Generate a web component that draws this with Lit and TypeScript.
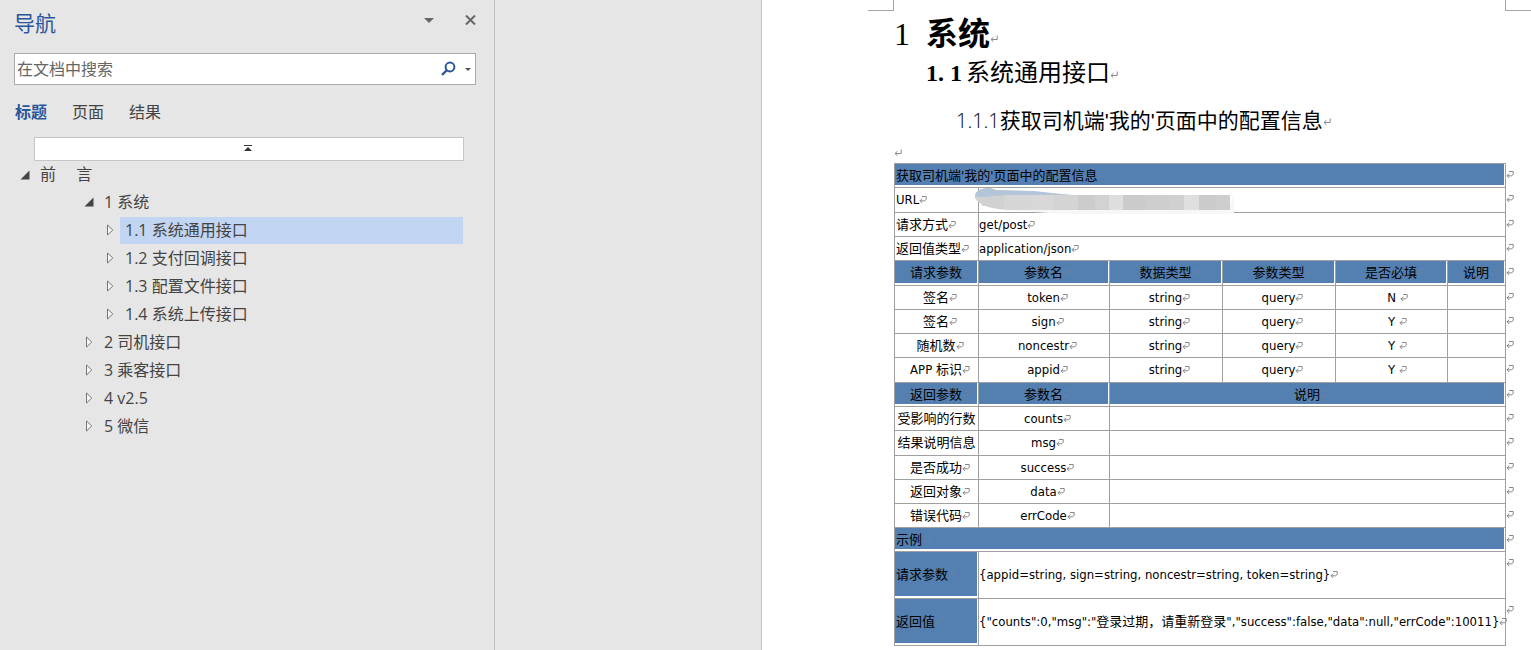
import { LitElement, html, css, svg, nothing } from "lit";
import { customElement } from "lit/decorators.js";

type Cell = { t?: string; span?: number; head?: boolean; center?: boolean; redact?: boolean; gap?: boolean; nomark?: boolean };
type Row = { cells: Cell[]; size?: string };

const c = (t: string, o: Partial<Cell> = {}): Cell => ({ t, center: true, ...o });
const h = (t: string, o: Partial<Cell> = {}): Cell => ({ t, center: true, head: true, ...o });
const l = (t: string, o: Partial<Cell> = {}): Cell => ({ t, ...o });

const param = (label: string, name: string, req: string, size = ""): Row => ({
  size,
  cells: [c(label), c(name), c("string"), c("query"), c(req, { gap: true }), {}],
});
const result = (label: string, name: string, size = "", nomark = false): Row => ({
  size,
  cells: [c(label, { nomark }), c(name), { span: 4 }],
});

const rows: Row[] = [
  { cells: [l("获取司机端'我的'页面中的配置信息", { span: 6, head: true })] },
  { size: "tall", cells: [l("URL"), { span: 5, redact: true }] },
  { cells: [l("请求方式"), l("get/post", { span: 5 })] },
  { cells: [l("返回值类型"), l("application/json", { span: 5 })] },
  { size: "tall", cells: [h("请求参数"), h("参数名"), h("数据类型"), h("参数类型"), h("是否必填"), h("说明")] },
  param("签名", "token", "N"),
  param("签名", "sign", "Y"),
  param("随机数", "noncestr", "Y"),
  param("APP 标识", "appid", "Y", "tall"),
  { cells: [h("返回参数"), h("参数名"), h("说明", { span: 4 })] },
  result("受影响的行数", "counts", "", true),
  result("结果说明信息", "msg", "tall", true),
  result("是否成功", "success"),
  result("返回对象", "data"),
  result("错误代码", "errCode"),
  { cells: [l("示例", { span: 6, head: true })] },
  { size: "block", cells: [l("请求参数", { head: true }), l("{appid=string, sign=string, noncestr=string, token=string}", { span: 5 })] },
  { size: "block", cells: [l("返回值", { head: true }), l('{"counts":0,"msg":"登录过期，请重新登录","success":false,"data":null,"errCode":10011}', { span: 5 })] },
];

const tree = [
  { t: "前\u2003 言", level: 0, open: true },
  { t: "1 系统", level: 1, open: true },
  { t: "1.1 系统通用接口", level: 2, selected: true },
  { t: "1.2 支付回调接口", level: 2 },
  { t: "1.3 配置文件接口", level: 2 },
  { t: "1.4 系统上传接口", level: 2 },
  { t: "2 司机接口", level: 1 },
  { t: "3 乘客接口", level: 1 },
  { t: "4 v2.5", level: 1 },
  { t: "5 微信", level: 1 },
] as { t: string; level: number; open?: boolean; selected?: boolean }[];

const cellMark = html`<svg class="mark" width="8" height="9" viewBox="0 0 8 9" aria-hidden="true">
  <path d="M3 1.5H7.2V4.5L5.5 5.8H1M3.2 3.6L1 5.8L3.2 8" fill="none" stroke="currentColor" />
</svg>`;
const paraMark = html`<svg class="mark" width="8" height="10" viewBox="0 0 8 10" aria-hidden="true">
  <path d="M7.2 0.5V4.5H1M3.5 2.2L1 4.5L3.5 6.8" fill="none" stroke="currentColor" />
</svg>`;

const blocks: [number, number, string][] = [
  [8, 22, "#cfd1d3"], [30, 27, "#d6d6d6"], [57, 22, "#d8d8d8"], [79, 25, "#d4d4d4"],
  [104, 17, "#cccccc"], [121, 14, "#d2d2d2"], [135, 14, "#dedede"], [149, 22, "#cbcbcb"],
  [171, 25, "#cecece"], [196, 14, "#d0d0d0"], [210, 15, "#dfdfdf"], [225, 17, "#cbcbcb"], [242, 14, "#cecece"],
];

@customElement("app-root")
export class AppRoot extends LitElement {
  static styles = css`
    :host {
      display: flex;
      min-height: 100vh;
      background: #e6e6e6;
      color: #444;
      font-family: "Open Sans", "Noto Sans CJK SC", sans-serif;
      font-size: 16px;
    }
    * { box-sizing: border-box; }
    button, input { font: inherit; color: inherit; margin: 0; padding: 0; border: 0; background: none; }
    svg { display: block; }
    .pane {
      flex: none;
      width: 495px;
      border-right: 1px solid #c0c0c0;
      padding: 8px 18px 0 14px;
    }
    .top { display: flex; align-items: center; height: 30px; }
    .title { flex: 1; margin: 0; font-size: 21px; line-height: 30px; font-weight: 400; color: #2b579a; }
    .tool { display: flex; align-items: center; justify-content: center; width: 12px; height: 24px; margin-bottom: 6px; }
    .tool + .tool { margin-left: 29px; }
    .search {
      display: flex;
      align-items: center;
      height: 32px;
      margin-top: 15px;
      background: #fff;
      border: 1px solid #ababab;
    }
    .search input { flex: 1; min-width: 0; height: 30px; padding-left: 2px; outline: 0; }
    .search input::placeholder { color: #666; opacity: 1; }
    .search button { height: 30px; display: flex; align-items: center; padding-right: 8px; }
    .search .more { padding-right: 4px; }
    .tabs { display: flex; margin-top: 15px; padding-left: 1px; height: 24px; gap: 25px; }
    .tabs button { line-height: 24px; }
    .tabs .on { color: #2b579a; font-weight: 700; }
    .jump {
      display: flex;
      align-items: center;
      justify-content: center;
      width: 430px;
      height: 24px;
      margin: 13px 0 0 20px;
      background: #fff;
      border: 1px solid #c6c6c6;
    }
    .tree { list-style: none; margin: 0; padding: 0 13px 0 0; }
    .node { display: flex; align-items: center; height: 28px; }
    .node svg { flex: none; }
    .node a {
      flex: 1;
      margin-left: 5px;
      padding-left: 5px;
      height: 27px;
      line-height: 27px;
      color: inherit;
      text-decoration: none;
      white-space: pre;
    }
    .level0 { padding-left: 6px; height: 27px; }
    .level1 { padding-left: 70px; }
    .level2 { padding-left: 91px; }
    .selected a { background: #c2d5f2; }

    .desk { flex: 1; min-width: 0; padding-left: 266px; }
    .page {
      min-height: 100%;
      background: #fff;
      border-left: 1px solid #c6c6c6;
      color: #000;
      overflow: hidden;
    }
    .corners { display: flex; justify-content: space-between; height: 11px; padding-left: 106px; }
    .corner { width: 26px; border-bottom: 1px solid #a6a6a6; }
    .corner:first-child { border-right: 1px solid #a6a6a6; }
    .corner:last-child { border-left: 1px solid #a6a6a6; }
    .body { padding: 0 9px 4px 132px; }
    .body h1, .body h2, .body h3, .blank { display: flex; align-items: baseline; margin: 0; white-space: pre; }
    .mark { display: inline-block; flex: none; color: #888; }
    .body h1 { font: 700 32px/46px "Liberation Serif", "Noto Sans CJK SC", serif; }
    .body h1 .num { width: 32px; font-weight: 400; }
    .body h2 { padding-left: 32px; font: 400 24px/32px "Liberation Serif", "Noto Sans CJK SC", serif; }
    .body h2 .num { width: 40px; font-weight: 700; }
    .body h3 { padding: 16px 0 0 62px; font: 400 21px/32px "Liberation Sans", "Noto Sans CJK SC", sans-serif; }
    .body h3 .num { font: 300 20px/32px "Open Sans", sans-serif; }
    .blank { height: 26px; padding-top: 8px; align-items: center; }
    table {
      width: 100%;
      table-layout: fixed;
      border-collapse: collapse;
      font: 13px/20px "DejaVu Sans Condensed", "Noto Sans CJK SC", sans-serif;
    }
    .c1 { width: 84px; }
    .c2 { width: 131px; }
    .c3 { width: 113px; }
    .c5 { width: 112px; }
    .c6 { width: 58px; }
    tr { height: 24px; }
    .tall { height: 25px; }
    .block { height: 47px; }
    td, th {
      position: relative;
      padding: 0;
      border: 1px solid #a0a0a0;
      font-weight: 400;
      text-align: left;
      white-space: pre;
    }
    td:first-child, th:first-child { padding-left: 1px; }
    td.center, th.center { text-align: center; padding-left: 7px; }
    td.gap { padding-left: 12px; }
    td.full { padding-left: 0; }
    .head { background: #547fb1; box-shadow: inset -1px -2px #fff; }
    .head .mark { color: #6483a6; }
    .gap .mark { margin-left: 4px; }
    td.end { border: 0; padding: 6px 0 0 0; vertical-align: top; }
    .end .mark { display: block; }
    .redact { position: absolute; left: -5px; top: 0; }
  `;

  private cell(x: Cell) {
    const cls = [x.head ? "head" : "", x.center ? "center" : "", x.gap ? "gap" : "", x.nomark ? "full" : ""].join(" ");
    const body = html`${x.t ?? ""}${x.t && !x.nomark ? cellMark : nothing}${x.redact
      ? html`<svg class="redact" width="262" height="26" viewBox="0 0 262 26" aria-hidden="true">
          <path d="M6 16H256L260 7V26H90L30 22Z" fill="#f7f7f7" />
          <path d="M1 6Q4 0 16 0L22 2L60 4L100 7H256V22H40Q8 22 1 10Z" fill="#d2d2d2" />
          ${blocks.map(([bx, w, f]) => svg`<rect x=${bx} y="7" width=${w} height=${bx < 25 ? 11 : 15} fill=${f} />`)}
          <path d="M1 8Q2 0 16 0L22 2L60 3L96 7H30L8 9Z" fill="#b3c5d9" />
        </svg>`
      : nothing}`;
    return x.head
      ? html`<th class=${cls} colspan=${x.span ?? 1}>${body}</th>`
      : html`<td class=${cls} colspan=${x.span ?? 1}>${body}</td>`;
  }

  render() {
    return html`
      <aside class="pane">
        <header class="top">
          <h2 class="title">导航</h2>
          <button class="tool" aria-label="窗格选项">
            <svg width="10" height="5" viewBox="0 0 10 5"><path d="M0 0H10L5 5Z" fill="#666" /></svg>
          </button>
          <button class="tool" aria-label="关闭">
            <svg width="12" height="10" viewBox="0 0 12 10"><path d="M2 0.5L11 9.5M11 0.5L2 9.5" stroke="#666" stroke-width="2" /></svg>
          </button>
        </header>
        <form class="search" role="search">
          <input type="text" placeholder="在文档中搜索" aria-label="在文档中搜索" />
          <button type="button" aria-label="搜索">
            <svg width="16" height="16" viewBox="0 0 16 16"><circle cx="9" cy="6" r="4.4" fill="none" stroke="#2b579a" stroke-width="2" /><path d="M6 9L1 14" stroke="#2b579a" stroke-width="2.4" /></svg>
          </button>
          <button type="button" class="more" aria-label="搜索选项">
            <svg width="6" height="3" viewBox="0 0 6 3"><path d="M0 0H6L3 3Z" fill="#555" /></svg>
          </button>
        </form>
        <nav class="tabs">
          <button class="on">标题</button><button>页面</button><button>结果</button>
        </nav>
        <button class="jump" aria-label="跳转到开头">
          <svg width="10" height="8" viewBox="0 0 10 8"><path d="M0 0.5H8" stroke="#333" /><path d="M4 2L8 6H0Z" fill="#333" /></svg>
        </button>
        <ul class="tree">
          ${tree.map(
            (n) => html`<li class="node level${n.level} ${n.selected ? "selected" : ""}">
              ${n.open
                ? html`<svg width="10" height="10" viewBox="0 0 10 10"><path d="M9.5 0.5V9.5H0.5Z" fill="#444" /></svg>`
                : html`<svg width="10" height="12" viewBox="0 0 10 12"><path d="M2.5 1L7.8 6L2.5 11Z" fill="#f6f6f6" stroke="#777" /></svg>`}
              <a href="#">${n.t}</a>
            </li>`
          )}
        </ul>
      </aside>
      <main class="desk">
        <article class="page">
          <div class="corners"><span class="corner"></span><span class="corner"></span></div>
          <div class="body">
            <h1><span class="num">1</span>系统${paraMark}</h1>
            <h2><span class="num">1. 1</span>系统通用接口${paraMark}</h2>
            <h3><span class="num">1.1.1</span><span>获取司机端'我的'页面中的配置信息</span>${paraMark}</h3>
            <div class="blank">${paraMark}</div>
            <table>
              <colgroup>
                <col class="c1" /><col class="c2" /><col class="c3" /><col class="c3" /><col class="c5" /><col class="c6" /><col />
              </colgroup>
              <tbody>
                ${rows.map((r) => html`<tr class=${r.size ?? ""}>${r.cells.map((x) => this.cell(x))}<td class="end">${cellMark}</td></tr>`)}
              </tbody>
            </table>
          </div>
        </article>
      </main>
    `;
  }
}
